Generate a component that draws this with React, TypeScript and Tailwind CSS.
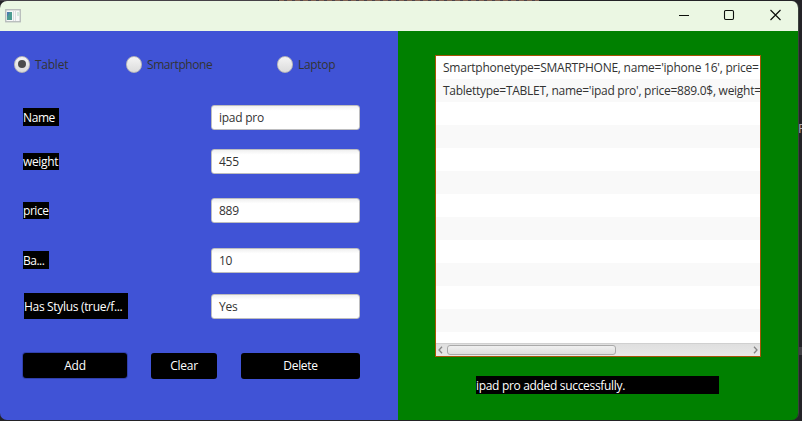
import React from "react";

function Radio({ label, checked, className }: { label: string; checked?: boolean; className: string }) {
  return (
    <label className={`flex h-[18px] items-center ${className}`}>
      <span className="flex h-[17px] w-4 items-center justify-center rounded-full border border-[#b4b5bb] bg-linear-to-b from-[#f4f4f4] to-[#dcdcdc]">
        {checked && <span className="size-2 rounded-full bg-[#4c4c4c]" />}
      </span>
      <span className="ml-[5px] pt-px text-[#333333]">{label}</span>
    </label>
  );
}

function Field({ label, value, rowClass, labelClass }: { label: string; value: string; rowClass: string; labelClass: string }) {
  return (
    <div className={`flex justify-between pr-[38px] ${rowClass}`}>
      <span className={`flex items-center bg-black text-white ${labelClass}`}>{label}</span>
      <span className="flex h-[25px] w-[149px] shrink-0 items-center rounded-[3px] border border-[#bdbdbf] bg-linear-to-b from-[#f0f0f0] to-white to-20% pl-[7px] tracking-[-0.25px] text-[#333333]">
        {value}
      </span>
    </div>
  );
}

const rows = [
  { text: "Smartphonetype=SMARTPHONE, name='iphone 16', price=", cls: "tracking-[-0.24px]" },
  { text: "Tablettype=TABLET, name='ipad pro', price=889.0$, weight=", cls: "tracking-[-0.27px]" },
  ...Array.from({ length: 11 }, () => ({ text: "", cls: "" })),
];

export default function App() {
  return (
    <div className="relative h-[421px] w-[802px] overflow-hidden bg-[#242327] pt-px font-['Open_Sans','Noto_Sans',sans-serif] text-[12px] leading-[18px] tracking-[-0.32px] whitespace-nowrap">
      <div className="absolute top-0 left-[279px] h-px w-[260px] bg-[repeating-linear-gradient(90deg,#80604f_0_5px,#49424a_5px_8px)]" />
      <div className="absolute top-0 left-0 h-px w-[278px] bg-[#454147]" />
      <div className="absolute top-[119px] left-[798px] w-[4px] overflow-hidden text-[13px] text-[#a9a9ad]">F</div>
      <div className="absolute top-[347px] left-[799px] h-2 w-[3px] bg-[#414044]" />
      <div className="relative flex h-[419px] w-[799px] flex-col overflow-hidden rounded-[7px] border-r border-[#3b423d]">
        <header className="flex h-[30px] shrink-0 items-center bg-[#ebf7e3]">
          <svg className="ml-[5px]" width="16" height="14" viewBox="0 0 16 14">
            <rect x=".75" y=".75" width="14.5" height="12" fill="#f7f8f8" stroke="#b4b8b8" strokeWidth="1.3" />
            <rect x="2" y="3" width="5" height="8" fill="#4c9b91" />
            <path d="M2 3h3l-3 5z" fill="#4b7dad" />
            <path d="M8.5 2v10M10.5 2v10" stroke="#dadddf" />
            <rect x="12" y="3" width="2.5" height="4" fill="#d3e8dd" />
          </svg>
          <svg className="mt-[-2px] mr-[13px] ml-auto" width="106" height="14" viewBox="0 0 106 14" fill="none" stroke="#0c0f0b">
            <path d="M0 7.5h10" />
            <rect x="45.5" y="2.5" width="9" height="9" rx="1.2" strokeWidth="1.1" />
            <path d="M91.5 2l10 10M101.5 2l-10 10" strokeWidth="1.15" />
          </svg>
        </header>
        <main className="flex h-[389px]">
          <section className="w-[398px] shrink-0 bg-[#4053d6]">
            <div className="mt-6 flex h-[18px]">
              <Radio label="Tablet" checked className="ml-[14px] w-[112px] tracking-[-0.25px]" />
              <Radio label="Smartphone" className="w-[151px] tracking-[-0.42px]" />
              <Radio label="Laptop" className="w-[80px]" />
            </div>
            <Field label="Name" value="ipad pro" rowClass="mt-8 pl-[23px]" labelClass="mt-[3px] h-[18px] w-9 pt-[2px] tracking-[-0.4px]" />
            <Field label="weight" value="455" rowClass="mt-[19px] pl-[23px]" labelClass="mt-1 h-[17px] w-9 pt-px tracking-[-0.35px]" />
            <Field label="price" value="889" rowClass="mt-6 pl-[23px]" labelClass="mt-1 h-[17px] w-[26px] pt-px tracking-[-0.45px]" />
            <Field label="Ba..." value="10" rowClass="mt-[25px] pl-[23px]" labelClass="mt-[3px] h-[18px] w-[26px] pt-[2px] tracking-[-0.5px]" />
            <Field label="Has Stylus (true/f..." value="Yes" rowClass="mt-[21px] pl-6" labelClass="-mt-px h-[26px] w-[104px] pt-[2px]" />
            <div className="mt-[34px] flex pl-[23px] text-white">
              <button className="h-[25px] w-[104px] rounded-[3px] bg-black tracking-[-0.2px] shadow-[0_0_0_1px_#3040ac]">Add</button>
              <button className="ml-6 h-[26px] w-[66px] rounded-[3px] bg-black tracking-[-0.25px]">Clear</button>
              <button className="ml-6 h-[26px] w-[119px] rounded-[3px] bg-black tracking-[-0.3px]">Delete</button>
            </div>
          </section>
          <section className="flex-1 bg-[#008000]">
            <div className="mt-6 ml-[37px] flex h-[302px] w-[326px] flex-col border border-[#a65407]">
              <div className="h-[287px] overflow-hidden bg-white">
                {rows.map((r, i) => (
                  <div key={i} className="h-[23px] overflow-hidden pl-[7px] leading-[24px] text-[#333333] odd:bg-white even:bg-[#f9f9f9]">
                    <span className={r.cls}>{r.text}</span>
                  </div>
                ))}
              </div>
              <div className="flex h-[13px] items-center justify-between border-t border-[#d0d0d0] bg-linear-to-b from-[#dfdfdf] to-[#e9e9e9] px-[2px]">
                <svg width="5" height="8" fill="none" stroke="#858585" strokeWidth="1.3"><path d="M4 .7L1 4l3 3.3" /></svg>
                <div className="mr-auto ml-1 h-[10px] w-[169px] rounded-[3px] border border-[#aaaaaa] bg-linear-to-b from-[#f0f0f0] to-[#dedede]" />
                <svg width="5" height="8" fill="none" stroke="#858585" strokeWidth="1.3"><path d="M1 .7L4 4 1 7.3" /></svg>
              </div>
            </div>
            <div className="mt-[19px] ml-[78px] h-[18px] w-[243px] bg-black leading-[20px] text-white">ipad pro added successfully.</div>
          </section>
        </main>
      </div>
    </div>
  );
}
